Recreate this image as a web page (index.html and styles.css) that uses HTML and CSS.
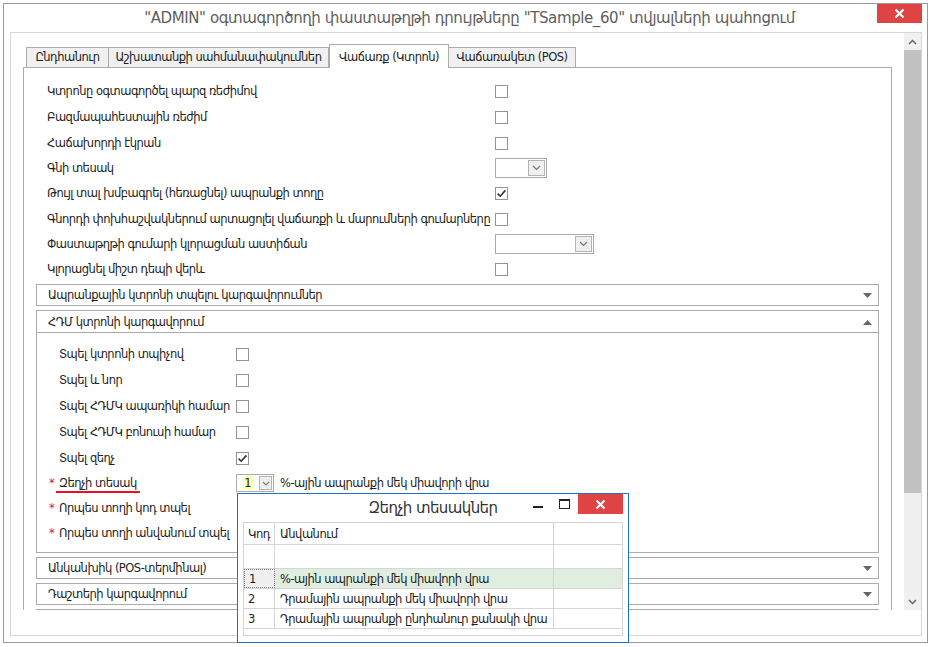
FILE: index.html
```html
<!DOCTYPE html>
<html lang="hy">
<head>
<meta charset="utf-8">
<title>Դրույթներ</title>
<link rel="stylesheet" href="styles.css">
</head>
<body>
<div class="window">
  <div class="titlebar">
    <div class="title">"ADMIN" օգտագործողի փաստաթղթի դրույթները "TSample_60" տվյալների պահոցում</div>
    <div class="close-btn"><svg width="11" height="11" viewBox="0 0 11 11"><path d="M1.5 1.5 L9.5 9.5 M9.5 1.5 L1.5 9.5" stroke="#fff" stroke-width="2.2"/></svg></div>
  </div>
  <div class="frame">
    <div class="viewport">
      <div class="tabctl">
        <div class="tabs">
          <div class="tab t1">Ընդհանուր</div>
          <div class="tab t2">Աշխատանքի սահմանափակումներ</div>
          <div class="tab t3 active">Վաճառք (Կտրոն)</div>
          <div class="tab t4">Վաճառակետ (POS)</div>
        </div>
        <div class="panel">
          <div class="opts">
            <div class="row"><span class="lbl">Կտրոնը օգտագործել պարզ ռեժիմով</span><span class="cb"></span></div>
            <div class="row"><span class="lbl">Բազմապահեստային ռեժիմ</span><span class="cb"></span></div>
            <div class="row"><span class="lbl">Հաճախորդի էկրան</span><span class="cb"></span></div>
            <div class="row short"><span class="lbl">Գնի տեսակ</span><span class="combo c-small"><span class="dd"><svg width="9" height="6" viewBox="0 0 9 6"><path d="M1 1 L4.5 4.5 L8 1" fill="none" stroke="#777" stroke-width="1.2"/></svg></span></span></div>
            <div class="row"><span class="lbl">Թույլ տալ խմբագրել (հեռացնել) ապրանքի տողը</span><span class="cb"><svg width="11" height="11" viewBox="0 0 11 11"><path d="M1.6 5.6 L4.2 8.2 L9.4 2.4" fill="none" stroke="#333" stroke-width="1.6"/></svg></span></div>
            <div class="row"><span class="lbl">Գնորդի փոխհաշվակներում արտացոլել վաճառքի և մարումների գումարները</span><span class="cb"></span></div>
            <div class="row short"><span class="lbl">Փաստաթղթի գումարի կլորացման աստիճան</span><span class="combo c-wide"><span class="dd"><svg width="9" height="6" viewBox="0 0 9 6"><path d="M1 1 L4.5 4.5 L8 1" fill="none" stroke="#777" stroke-width="1.2"/></svg></span></span></div>
            <div class="row"><span class="lbl">Կլորացնել միշտ դեպի վերև</span><span class="cb"></span></div>
          </div>

          <div class="secs">
            <div class="sec">
              <div class="sec-head"><span>Ապրանքային կտրոնի տպելու կարգավորումներ</span><svg class="arr" width="9" height="5" viewBox="0 0 9 5"><path d="M0 0 H9 L4.5 5 Z" fill="#666"/></svg></div>
            </div>
            <div class="sec open">
              <div class="sec-head"><span>ՀԴՄ կտրոնի կարգավորում</span><svg class="arr" width="9" height="5" viewBox="0 0 9 5"><path d="M0 5 H9 L4.5 0 Z" fill="#666"/></svg></div>
              <div class="sec-body">
                <div class="row"><span class="lbl2">Տպել կտրոնի տպիչով</span><span class="cb"></span></div>
                <div class="row"><span class="lbl2">Տպել և նոր</span><span class="cb"></span></div>
                <div class="row"><span class="lbl2">Տպել ՀԴՄԿ ապառիկի համար</span><span class="cb"></span></div>
                <div class="row"><span class="lbl2">Տպել ՀԴՄԿ բոնուսի համար</span><span class="cb"></span></div>
                <div class="row"><span class="lbl2">Տպել զեղչ</span><span class="cb"><svg width="11" height="11" viewBox="0 0 11 11"><path d="M1.6 5.6 L4.2 8.2 L9.4 2.4" fill="none" stroke="#333" stroke-width="1.6"/></svg></span></div>
                <div class="row req first"><span class="lbl2"><span class="ast">*</span><span class="err">Զեղչի տեսակ</span></span><span class="combo c-code"><span class="val">1</span><span class="dd sm"><svg width="8" height="5" viewBox="0 0 8 5"><path d="M1 1 L4 4 L7 1" fill="none" stroke="#777" stroke-width="1.1"/></svg></span></span><span class="combo-text">%-ային ապրանքի մեկ միավորի վրա</span></div>
                <div class="row req"><span class="lbl2"><span class="ast">*</span>Որպես տողի կոդ տպել</span></div>
                <div class="row req"><span class="lbl2"><span class="ast">*</span>Որպես տողի անվանում տպել</span></div>
              </div>
            </div>
            <div class="sec">
              <div class="sec-head"><span>Անկանխիկ (POS-տերմինալ)</span><svg class="arr" width="9" height="5" viewBox="0 0 9 5"><path d="M0 0 H9 L4.5 5 Z" fill="#666"/></svg></div>
            </div>
            <div class="sec">
              <div class="sec-head"><span>Դաշտերի կարգավորում</span><svg class="arr" width="9" height="5" viewBox="0 0 9 5"><path d="M0 0 H9 L4.5 5 Z" fill="#666"/></svg></div>
            </div>
            <div class="sec">
              <div class="sec-head"><span></span><svg class="arr" width="9" height="5" viewBox="0 0 9 5"><path d="M0 0 H9 L4.5 5 Z" fill="#666"/></svg></div>
            </div>
          </div>
        </div>
      </div>
    </div>
    <div class="vscroll">
      <div class="sb-btn"><svg width="9" height="6" viewBox="0 0 9 6"><path d="M1 5 L4.5 1.5 L8 5" fill="none" stroke="#606060" stroke-width="1.4"/></svg></div>
      <div class="sb-thumb"></div>
      <div class="sb-track"></div>
      <div class="sb-btn"><svg width="9" height="6" viewBox="0 0 9 6"><path d="M1 1 L4.5 4.5 L8 1" fill="none" stroke="#606060" stroke-width="1.4"/></svg></div>
    </div>
  </div>

  <div class="popup">
    <div class="ptitlebar">
      <div class="ptitle">Զեղչի տեսակներ</div>
      <div class="pbtns">
        <span class="pmin"></span>
        <span class="pmax"></span>
        <span class="pclose"><svg width="11" height="11" viewBox="0 0 11 11"><path d="M1.5 1.5 L9.5 9.5 M9.5 1.5 L1.5 9.5" stroke="#fff" stroke-width="2.2"/></svg></span>
      </div>
    </div>
    <div class="grid">
      <div class="grow head"><div class="gc">Կոդ</div><div class="gc">Անվանում</div><div class="gc"></div></div>
      <div class="grow filter"><div class="gc"></div><div class="gc"></div><div class="gc"></div></div>
      <div class="grow item sel"><div class="gc focus">1</div><div class="gc">%-ային ապրանքի մեկ միավորի վրա</div><div class="gc"></div></div>
      <div class="grow item"><div class="gc">2</div><div class="gc">Դրամային ապրանքի մեկ միավորի վրա</div><div class="gc"></div></div>
      <div class="grow item"><div class="gc">3</div><div class="gc">Դրամային ապրանքի ընդհանուր քանակի վրա</div><div class="gc"></div></div>
    </div>
  </div>
</div>
</body>
</html>
```
FILE: styles.css
```css
* { box-sizing: border-box; }
html, body { margin: 0; padding: 0; background: #fff; }
body {
  font-family: "DejaVu Sans", "Noto Sans", sans-serif;
  font-size: 11.5px;
  letter-spacing: -0.5px;
  color: #222;
}

.window {
  position: relative;
  margin: 3px 0 0 3px;
  width: 925px;
  height: 640px;
  border: 1px solid #9b9b9b;
  background: #fff;
}

.titlebar { position: relative; height: 28px; }
.title {
  text-align: center;
  font-size: 15px;
  letter-spacing: -0.4px;
  line-height: 28px;
  color: #5e5e5e;
  padding-left: 8px;
  white-space: nowrap;
}
.close-btn {
  position: absolute;
  top: 0;
  right: 5px;
  width: 45px;
  height: 19px;
  background: #e04343;
  display: flex;
  align-items: center;
  justify-content: center;
}

.frame {
  margin-left: 6px;
  width: 912px;
  height: 604px;
  border: 1px solid #d6d6d6;
  display: flex;
  align-items: flex-start;
}
.viewport { width: 893px; height: 577px; overflow: hidden; }

.tabctl { margin: 11px 0 0 12px; width: 869px; }
.tabs {
  position: relative;
  z-index: 1;
  display: flex;
  align-items: flex-end;
  height: 23px;
  padding-left: 3px;
}
.tab {
  height: 20px;
  border: 1px solid #acacac;
  border-bottom: 0;
  background: #f0f0f0;
  text-align: center;
  line-height: 18px;
  white-space: nowrap;
  margin-right: -1px;
}
.tab.t1 { width: 83px; }
.tab.t2 { width: 221px; }
.tab.t3 { width: 120px; margin-left: 1px; }
.tab.t4 { width: 128px; }
.tab.active {
  height: 24px;
  margin-bottom: -1px;
  background: #fff;
  padding-top: 3px;
}

.panel {
  border: 1px solid #acacac;
  padding: 10px 12px 0 12px;
  height: 640px;
}

.opts { padding-left: 11px; }
.row { display: flex; align-items: center; height: 26px; }
.row.short { height: 24px; }
.lbl { width: 448px; white-space: nowrap; }

.cb {
  width: 13px;
  height: 13px;
  border: 1px solid #939393;
  background: #fff;
  display: flex;
  align-items: center;
  justify-content: center;
}

.combo {
  height: 20px;
  border: 1px solid #ababab;
  background: #fff;
  display: flex;
  align-items: center;
  justify-content: flex-end;
  padding-right: 1px;
}
.combo.c-small { width: 52px; }
.combo.c-wide { width: 99px; }
.dd {
  width: 17px;
  height: 16px;
  border: 1px solid #b4b4b4;
  background: #efefef;
  display: flex;
  align-items: center;
  justify-content: center;
}

.secs { margin-top: 2px; }
.sec { border: 1px solid #ababab; margin-bottom: 4px; }
.sec-head {
  height: 20px;
  display: flex;
  align-items: center;
  justify-content: space-between;
  padding: 0 6px 0 11px;
  white-space: nowrap;
}
.sec.open .sec-head { height: 22px; border-bottom: 1px solid #ababab; padding-top: 1px; }
.sec-body { padding: 8px 0 7px 22px; }
.lbl2 { width: 177px; white-space: nowrap; }
.row.req { height: 25px; }
.row.req.first { height: 24px; }
.row.req .lbl2 { margin-left: -10px; width: 187px; }
.ast { display: inline-block; width: 10px; color: #e02020; }
.err { border-bottom: 2px solid #e81123; padding: 0 3px 1px; margin-left: -3px; }

.combo.c-code {
  width: 38px;
  height: 18px;
  justify-content: space-between;
  padding: 0 1px 0 6px;
}
.val { width: 10px; background: #fdfdb4; text-align: center; line-height: 14px; letter-spacing: 0; }
.dd.sm { width: 13px; height: 14px; }
.combo-text { margin-left: 6px; white-space: nowrap; }

.vscroll {
  width: 17px;
  height: 577px;
  background: #f0f0f0;
  display: flex;
  flex-direction: column;
}
.sb-btn { height: 17px; display: flex; align-items: center; justify-content: center; }
.sb-thumb { height: 443px; background: #c1c1c1; }
.sb-track { flex: 1; }

.popup {
  position: absolute;
  left: 233px;
  top: 489px;
  width: 392px;
  height: 150px;
  border: 1px solid #1c74c8;
  background: #fff;
  z-index: 5;
}
.ptitlebar { position: relative; height: 28px; }
.ptitle { text-align: center; font-size: 15px; letter-spacing: -0.6px; line-height: 28px; color: #333; }
.pbtns {
  position: absolute;
  top: 0;
  right: 5px;
  display: flex;
  align-items: flex-start;
}
.pmin { width: 10px; height: 2px; background: #222; margin: 12px 16px 0 0; }
.pmax { width: 11px; height: 10px; border: 1px solid #222; border-top-width: 2px; margin: 5px 8px 0 0; }
.pclose {
  width: 45px;
  height: 20px;
  background: #e04343;
  display: flex;
  align-items: center;
  justify-content: center;
}

.grid { margin: 0 5px; height: 114px; border: 1px solid #d5d5d5; }
.grow {
  display: grid;
  grid-template-columns: 31px 279px 1fr;
  border-bottom: 1px solid #d5d5d5;
  height: 20px;
}
.grow.head { height: 22px; }
.grow.filter { height: 24px; }
.gc {
  border-right: 1px solid #d5d5d5;
  padding-left: 5px;
  display: flex;
  align-items: center;
  white-space: nowrap;
}
.gc:first-child { padding-left: 4px; }
.gc:last-child { border-right: 0; }
.grow.sel .gc { background: #dfeedf; }
.grow.sel .gc.focus { background: #f0f0f0; border: 1px dotted #777; }
```
